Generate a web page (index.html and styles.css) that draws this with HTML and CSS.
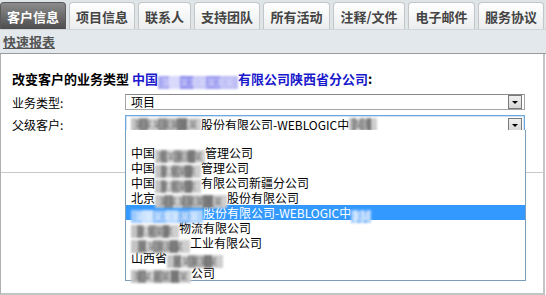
FILE: index.html
```html
<!DOCTYPE html>
<html lang="zh">
<head>
<meta charset="utf-8">
<link rel="stylesheet" href="styles.css">
</head>
<body>
<div class="tabs">
  <div class="tab active w66">客户信息</div>
  <div class="tab w66">项目信息</div>
  <div class="tab w52">联系人</div>
  <div class="tab w66">支持团队</div>
  <div class="tab w67">所有活动</div>
  <div class="tab w73">注释/文件</div>
  <div class="tab w67">电子邮件</div>
  <div class="tab w66">服务协议</div>
</div>
<div class="subbar"><a class="quick">快速报表</a></div>
<div class="panel">
  <div class="heading">改变客户的业务类型 <span class="blue">中国<span class="blur bb w80">某某某某某某某某</span>有限公司陕西省分公司</span>:</div>
  <div class="row r1">
    <span class="label">业务类型:</span>
    <div class="select"><span class="val">项目</span><span class="arrow"></span></div>
  </div>
  <div class="row r2">
    <span class="label">父级客户:</span>
    <div class="select focus"><span class="val"><span class="blur g w70">某某某某某某某</span>股份有限公司-WEBLOGIC中<span class="blur g w28">某某</span></span><span class="arrow"></span></div>
  </div>
  <div class="rule"></div>
  <ul class="dropdown">
    <li>&nbsp;</li>
    <li>中国<span class="blur g w50">某某某某某</span>管理公司</li>
    <li>中国<span class="blur g w46">某某某某</span>管理公司</li>
    <li>中国<span class="blur g w46">某某某某</span>有限公司新疆分公司</li>
    <li>北京<span class="blur g w73">某某某某某某某</span>股份有限公司</li>
    <li class="sel"><span class="blur l w72">某某某某某某某</span>股份有限公司-WEBLOGIC中<span class="blur l w20">某某</span></li>
    <li><span class="blur g w48">某某某某</span>物流有限公司</li>
    <li><span class="blur g w59">某某某某某</span>工业有限公司</li>
    <li>山西省<span class="blur g w56">某某某某某</span></li>
    <li><span class="blur g w60">某某某某某某</span>公司</li>
  </ul>
</div>
</body>
</html>
```

FILE: styles.css
```css
html, body {
  margin: 0;
  padding: 0;
  background: #ffffff;
}
body {
  width: 546px;
  height: 295px;
  overflow: hidden;
  font-family: "Noto Sans CJK SC", "Liberation Sans", sans-serif;
  font-size: 12px;
  color: #000;
}
.tabs {
  display: flex;
  gap: 3px;
  height: 29px;
  padding-top: 2px;
  box-sizing: border-box;
  background: #dfe4e7;
  align-items: flex-end;
}
.tab {
  height: 27px;
  box-sizing: border-box;
  border: 1px solid #c2c6c9;
  border-bottom: none;
  border-radius: 4px 4px 0 0;
  background: linear-gradient(#ffffff, #ebedee);
  font-weight: bold;
  font-size: 13px;
  color: #444;
  display: flex;
  align-items: center;
  justify-content: center;
  line-height: 1;
}
.tab.active {
  background: linear-gradient(#8c8c8c, #4d4d4d);
  color: #fff;
  border-color: #5a5a5a;
}
.w66 { width: 66px; }
.w52 { width: 53px; }
.w67 { width: 67px; }
.w73 { width: 72px; }
.subbar {
  height: 25px;
  box-sizing: border-box;
  background: #e2e8eb;
  border-top: 1px solid #cfd5d8;
  border-bottom: 1px solid #9a9a9a;
  padding-left: 3px;
  display: flex;
  align-items: center;
}
.quick {
  font-weight: bold;
  font-size: 13px;
  color: #555;
  text-decoration: underline;
}
.panel {
  position: relative;
  height: 241px;
  box-sizing: border-box;
  border-left: 1px solid #b0b0b0;
  border-right: 2px solid #c4c4c4;
  border-bottom: 2px solid #c4c4c4;
  margin-right: 1px;
  padding-top: 17px;
}
.heading {
  padding-left: 11px;
  font-weight: bold;
  font-size: 13px;
  line-height: 15px;
}
.blue { color: #1a1acc; }
.row {
  display: flex;
  align-items: center;
  padding-left: 11px;
}
.r1 { margin-top: 5px; height: 16px; }
.r2 { margin-top: 5px; height: 19px; }
.label {
  width: 113px;
  flex: none;
  font-size: 12px;
}
.select {
  width: 400px;
  height: 100%;
  box-sizing: border-box;
  border: 1px solid #a5a5a5;
  border-top-color: #8a8a8a;
  display: flex;
  align-items: center;
  justify-content: space-between;
  padding-left: 5px;
  padding-right: 2px;
  background: #fff;
}
.select.focus {
  border-color: #6fa7dc;
  box-shadow: inset 0 0 0 1px #cfe3f5;
}
.val {
  white-space: nowrap;
  line-height: 14px;
  display: flex;
  align-items: center;
}
.arrow {
  width: 14px;
  height: 14px;
  box-sizing: border-box;
  border: 1px solid #7a7a7a;
  background: linear-gradient(#f0f0f0, #d6d6d6);
  position: relative;
  flex: none;
}
.arrow::after {
  content: "";
  position: absolute;
  left: 3px;
  top: 5px;
  border-left: 3px solid transparent;
  border-right: 3px solid transparent;
  border-top: 3px solid #000;
}
.rule {
  margin-top: 38px;
  border-top: 1px solid #c8c8c8;
}
.blur {
  display: inline-block;
  vertical-align: -2px;
  height: 13px;
  line-height: 13px;
  white-space: nowrap;
  font-size: 9px;
  letter-spacing: 0;
  text-align: center;
  filter: blur(0.8px);
}
.blur.g {
  color: #6e6e6e;
  background: linear-gradient(90deg, #c4c4c4 0 12%, #8e8e8e 12% 25%, #d8d8d8 25% 38%, #9a9a9a 38% 52%, #bdbdbd 52% 66%, #7e7e7e 66% 80%, #cfcfcf 80% 100%);
}
.blur.l {
  color: #e4f0ff;
  background: linear-gradient(90deg, #9ccaff 0 15%, #c9e2ff 15% 30%, #88bdfb 30% 48%, #b8d9ff 48% 65%, #7fb7f7 65% 82%, #aed3ff 82% 100%);
}
.blur.bb {
  color: #d8d8fb;
  font-weight: normal;
  background: linear-gradient(90deg, #a9a9f3 0 14%, #d9d9fb 14% 28%, #8f8fef 28% 44%, #c8c8f8 44% 60%, #9b9bf1 60% 78%, #bdbdf6 78% 100%);
}
.w80 { width: 80px; }
.w70 { width: 70px; }
.w28 { width: 28px; }
.w50 { width: 50px; }
.w46 { width: 46px; }
.w72 { width: 72px; }
.w20 { width: 20px; }
.w48 { width: 48px; }
.w59 { width: 59px; }
.w56 { width: 56px; }
.w60 { width: 60px; }
.dropdown {
  position: absolute;
  left: 124px;
  top: 76px;
  width: 401px;
  height: 151px;
  box-sizing: border-box;
  margin: 0;
  padding: 0;
  list-style: none;
  background: #fff;
  border: 1px solid #7b9ebd;
  border-top: none;
}
.dropdown li {
  height: 15px;
  line-height: 15px;
  padding-left: 5px;
  white-space: nowrap;
}
.dropdown li.sel {
  background: #3399ff;
  color: #fff;
}
```
